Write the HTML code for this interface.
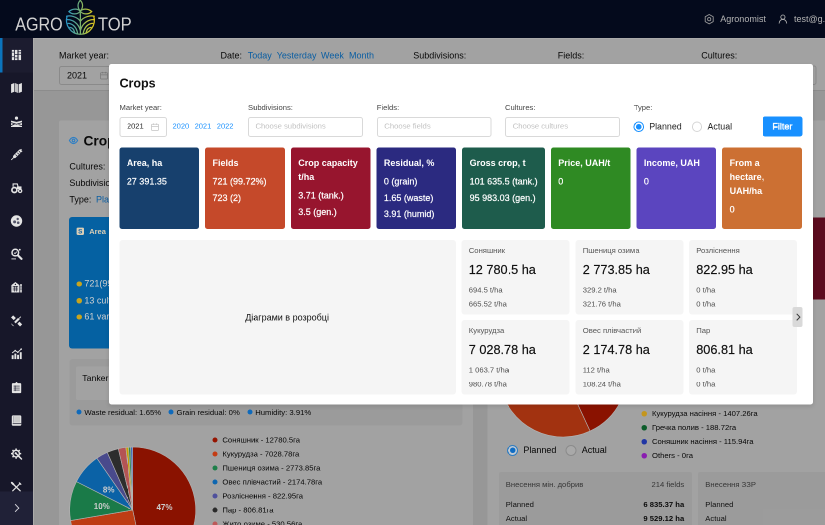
<!DOCTYPE html>
<html lang="en">
<head>
<meta charset="utf-8">
<title>AgroTop - Crops</title>
<style>
*{box-sizing:border-box;margin:0;padding:0}
html,body{width:825px;height:525px;overflow:hidden;background:#040a1c;font-family:"Liberation Sans",Arial,sans-serif;color:#222}
#root{position:absolute;left:0;top:0;width:1650px;height:1050px;transform:scale(.5);transform-origin:0 0;overflow:hidden;will-change:transform}
.a{position:absolute;white-space:nowrap;line-height:1}
.b{position:absolute}
svg{overflow:visible}
#top{position:absolute;left:0;top:0;width:1650px;height:75.5px;background:#040a1c;z-index:30;overflow:hidden}
#side{position:absolute;left:0;top:75.5px;width:65.5px;height:975px;background:#171729;z-index:30}
#content{position:absolute;left:0;top:0;width:1650px;height:1050px;background:#eeeeee;overflow:hidden}
#mask{position:absolute;left:0;top:0;width:1650px;height:1050px;background:rgba(0,0,0,.365);z-index:10}
#over{position:absolute;left:0;top:0;width:1650px;height:1050px;z-index:11}
.lnk{color:#1294ff}
.inp{border:2px solid #d9d9d9;border-radius:5px;background:#fff}
.card{background:#fff;border-radius:4px}
#modal{position:absolute;left:0;top:0;width:1650px;height:1050px;z-index:20}
.mbox{background:#fff;border-radius:5px;box-shadow:0 4px 10px rgba(0,0,0,.12)}
.ph{color:#bfbfbf}
.cc{border-radius:5px;color:#fff}
.gc{background:#f5f5f5;border-radius:6px}
</style>
</head>
<body>
<div id="root">
<div id="content">
<div class="b" style="left:66.00px;top:76.00px;width:1584.00px;height:106.00px;background:#fff;border-bottom:2px solid #ddd"></div>
<div class="a" style="left:118.00px;top:102.06px;font-size:18.00px;color:#0c0c0c">Market year:</div>
<div class="a" style="left:441.00px;top:102.06px;font-size:18.00px;color:#0c0c0c">Date:</div>
<div class="a lnk" style="left:495.50px;top:102.06px;font-size:18.00px;">Today</div>
<div class="a lnk" style="left:553.50px;top:102.06px;font-size:18.00px;">Yesterday</div>
<div class="a lnk" style="left:642.00px;top:102.06px;font-size:18.00px;">Week</div>
<div class="a lnk" style="left:698.00px;top:102.06px;font-size:18.00px;">Month</div>
<div class="a" style="left:826.50px;top:102.06px;font-size:18.00px;color:#0c0c0c">Subdivisions:</div>
<div class="a" style="left:1115.50px;top:102.06px;font-size:18.00px;color:#0c0c0c">Fields:</div>
<div class="a" style="left:1402.50px;top:102.06px;font-size:18.00px;color:#0c0c0c">Cultures:</div>
<div class="b inp" style="left:118.00px;top:132.00px;width:108.00px;height:38.00px;"></div>
<div class="a" style="left:134.00px;top:141.86px;font-size:18.00px;color:#0c0c0c">2021</div>
<div class="b inp" style="left:826.50px;top:132.00px;width:229.50px;height:38.00px;"></div>
<div class="b inp" style="left:1115.50px;top:132.00px;width:228.50px;height:38.00px;"></div>
<div class="b inp" style="left:1402.50px;top:131.20px;width:230.90px;height:38.80px;"></div>
<div class="b card" style="left:118.00px;top:241.00px;width:828.00px;height:879.00px;"></div>
<div class="a" style="left:167.00px;top:267.62px;font-size:27.50px;font-weight:bold;color:#111">Crops</div>
<div class="a" style="left:138.80px;top:323.66px;font-size:18.00px;color:#0c0c0c">Cultures:</div>
<div class="a" style="left:138.80px;top:356.86px;font-size:18.00px;color:#0c0c0c">Subdivisions:</div>
<div class="a" style="left:138.80px;top:390.46px;font-size:18.00px;color:#0c0c0c">Type:</div>
<div class="a lnk" style="left:192.00px;top:390.46px;font-size:18.00px;">Planned</div>
<div class="b" style="left:138.00px;top:434.00px;width:262.00px;height:262.50px;background:#0999ff;border-radius:6px"></div>
<div class="b" style="left:139.00px;top:718.00px;width:785.60px;height:133.40px;background:#f5f5f5;border-radius:6px"></div>
<div class="b" style="left:152.40px;top:733.40px;width:757.60px;height:66.60px;background:#fff;border-radius:4px"></div>
<div class="a" style="left:164.60px;top:748.18px;font-size:17.40px;color:#0c0c0c">Tanker: 3.71 t/ha</div>
<div class="a" style="left:168.80px;top:816.64px;font-size:15.40px;color:#0c0c0c">Waste residual: 1.65%</div>
<div class="a" style="left:353.00px;top:816.64px;font-size:15.40px;color:#0c0c0c">Grain residual: 0%</div>
<div class="a" style="left:510.40px;top:816.64px;font-size:15.40px;color:#0c0c0c">Humidity: 3.91%</div>
<div class="a" style="left:444.80px;top:871.87px;font-size:15.34px;color:#0c0c0c">Соняшник - 12780.5га</div>
<div class="a" style="left:444.80px;top:899.87px;font-size:15.34px;color:#0c0c0c">Кукурудза - 7028.78га</div>
<div class="a" style="left:444.80px;top:927.87px;font-size:15.34px;color:#0c0c0c">Пшениця озима - 2773.85га</div>
<div class="a" style="left:444.80px;top:955.87px;font-size:15.34px;color:#0c0c0c">Овес плівчастий - 2174.78га</div>
<div class="a" style="left:444.80px;top:983.87px;font-size:15.34px;color:#0c0c0c">Розліснення - 822.95га</div>
<div class="a" style="left:444.80px;top:1011.87px;font-size:15.34px;color:#0c0c0c">Пар - 806.81га</div>
<div class="a" style="left:444.80px;top:1039.87px;font-size:15.34px;color:#0c0c0c">Жито озиме - 530.56га</div>
<div class="b card" style="left:975.00px;top:241.00px;width:825.00px;height:879.00px;"></div>
<div class="b" style="left:1580.00px;top:434.80px;width:220.00px;height:164.60px;background:#8f1230;border-radius:6px"></div>
<div class="a" style="left:1046.80px;top:891.06px;font-size:18.00px;color:#0c0c0c">Planned</div>
<div class="a" style="left:1163.60px;top:891.06px;font-size:18.00px;color:#0c0c0c">Actual</div>
<div class="a" style="left:1304.00px;top:819.07px;font-size:15.34px;color:#0c0c0c">Кукурудза насіння - 1407.26га</div>
<div class="a" style="left:1304.00px;top:847.07px;font-size:15.34px;color:#0c0c0c">Гречка полив - 188.72га</div>
<div class="a" style="left:1304.00px;top:875.07px;font-size:15.34px;color:#0c0c0c">Соняшник насіння - 115.94га</div>
<div class="a" style="left:1304.00px;top:903.07px;font-size:15.34px;color:#0c0c0c">Others - 0га</div>
<div class="b" style="left:997.60px;top:944.40px;width:386.80px;height:175.60px;background:#f5f5f5;border-radius:4px"></div>
<div class="a" style="left:1011.60px;top:961.09px;font-size:15.30px;color:#555">Внесення мін. добрив</div>
<div class="a" style="right:281.60px;top:961.09px;font-size:15.30px;color:#555">214 fields</div>
<div class="a" style="left:1011.60px;top:1000.69px;font-size:15.30px;color:#1a1a1a">Planned</div>
<div class="a" style="left:1011.60px;top:1028.89px;font-size:15.30px;color:#1a1a1a">Actual</div>
<div class="a" style="right:281.60px;top:1000.69px;font-size:15.30px;color:#111;font-weight:bold">6 835.37 ha</div>
<div class="a" style="right:281.60px;top:1028.89px;font-size:15.30px;color:#111;font-weight:bold">9 529.12 ha</div>
<div class="b" style="left:1396.00px;top:944.40px;width:404.00px;height:175.60px;background:#f5f5f5;border-radius:4px"></div>
<div class="a" style="left:1410.60px;top:961.09px;font-size:15.30px;color:#555">Внесення ЗЗР</div>
<div class="a" style="left:1410.60px;top:1000.69px;font-size:15.30px;color:#1a1a1a">Planned</div>
<div class="a" style="left:1410.60px;top:1028.89px;font-size:15.30px;color:#1a1a1a">Actual</div>
<svg class="b" style="left:200.00px;top:143.40px;width:16.00px;height:16.00px;" viewBox="0 0 8 8"><rect x=".5" y="1.3" width="7" height="6.2" rx=".7" fill="none" stroke="#bdbdbd" stroke-width=".75"/><path d="M.5 3.4h7M2.4 .4v1.500M5.600 .4v1.500" stroke="#bdbdbd" stroke-width=".75" fill="none"/></svg>
</div>
<div id="mask"></div>
<div id="over">
<div class="a" style="left:178.40px;top:454.85px;font-size:15.00px;font-weight:bold;color:#dccfb6">Area</div>
<div class="b" style="left:153.20px;top:562.80px;width:10.40px;height:10.40px;background:#c8a41e;border-radius:50%"></div>
<div class="a" style="left:168.80px;top:558.46px;font-size:18.00px;color:#d0d0d0">721(99.72%)</div>
<div class="b" style="left:153.20px;top:596.30px;width:10.40px;height:10.40px;background:#c8a41e;border-radius:50%"></div>
<div class="a" style="left:168.80px;top:591.96px;font-size:18.00px;color:#d0d0d0">13 cultures</div>
<div class="b" style="left:153.20px;top:628.80px;width:10.40px;height:10.40px;background:#c8a41e;border-radius:50%"></div>
<div class="a" style="left:168.80px;top:624.46px;font-size:18.00px;color:#d0d0d0">61 varieties</div>
<div class="b" style="left:152.60px;top:819.40px;width:10.00px;height:10.00px;background:#0f6abb;border-radius:50%"></div>
<div class="b" style="left:337.00px;top:819.40px;width:10.00px;height:10.00px;background:#0f6abb;border-radius:50%"></div>
<div class="b" style="left:495.00px;top:819.40px;width:10.00px;height:10.00px;background:#0f6abb;border-radius:50%"></div>
<div class="b" style="left:424.60px;top:874.60px;width:10.80px;height:10.80px;background:#961400;border-radius:50%"></div>
<div class="b" style="left:424.60px;top:902.60px;width:10.80px;height:10.80px;background:#c43c14;border-radius:50%"></div>
<div class="b" style="left:424.60px;top:930.60px;width:10.80px;height:10.80px;background:#1d7f49;border-radius:50%"></div>
<div class="b" style="left:424.60px;top:958.60px;width:10.80px;height:10.80px;background:#0d66b0;border-radius:50%"></div>
<div class="b" style="left:424.60px;top:986.60px;width:10.80px;height:10.80px;background:#4f509c;border-radius:50%"></div>
<div class="b" style="left:424.60px;top:1014.60px;width:10.80px;height:10.80px;background:#2a2a2a;border-radius:50%"></div>
<div class="b" style="left:424.60px;top:1042.60px;width:10.80px;height:10.80px;background:#bd5959;border-radius:50%"></div>
<div class="b" style="left:1014.40px;top:889.80px;width:22.00px;height:22.00px;border:2px solid #2f7cc0;border-radius:50%;background:#c2cad2"></div>
<div class="b" style="left:1019.80px;top:895.20px;width:11.20px;height:11.20px;background:#106dc4;border-radius:50%"></div>
<div class="b" style="left:1131.40px;top:889.80px;width:22.00px;height:22.00px;border:2px solid #8b8b8b;border-radius:50%;background:#a9a9a9"></div>
<div class="b" style="left:1283.40px;top:821.80px;width:10.80px;height:10.80px;background:#c4961e;border-radius:50%"></div>
<div class="b" style="left:1283.40px;top:849.80px;width:10.80px;height:10.80px;background:#0c5c2a;border-radius:50%"></div>
<div class="b" style="left:1283.40px;top:877.80px;width:10.80px;height:10.80px;background:#2036a4;border-radius:50%"></div>
<div class="b" style="left:1283.40px;top:905.80px;width:10.80px;height:10.80px;background:#8a1eb0;border-radius:50%"></div>
<svg class="b" style="left:0.00px;top:0.00px;width:1650.00px;height:1050.00px;" viewBox="0 0 825 525"><path d="M132.70 510.00L132.70 447.00A63 63 0 0 1 145.83 571.62z" fill="#8a1200" stroke="#b4b4b4" stroke-width="0.6" stroke-linejoin="round"/><path d="M132.70 510.00L145.83 571.62A63 63 0 0 1 70.59 520.56z" fill="#bd3c14" stroke="#b4b4b4" stroke-width="0.6" stroke-linejoin="round"/><path d="M132.70 510.00L70.59 520.56A63 63 0 0 1 76.47 481.59z" fill="#1a7a48" stroke="#b4b4b4" stroke-width="0.6" stroke-linejoin="round"/><path d="M132.70 510.00L76.47 481.59A63 63 0 0 1 96.92 458.15z" fill="#0b62a6" stroke="#b4b4b4" stroke-width="0.6" stroke-linejoin="round"/><path d="M132.70 510.00L96.92 458.15A63 63 0 0 1 107.28 452.36z" fill="#494a8c" stroke="#b4b4b4" stroke-width="0.6" stroke-linejoin="round"/><path d="M132.70 510.00L107.28 452.36A63 63 0 0 1 118.32 448.66z" fill="#2d2d2d" stroke="#b4b4b4" stroke-width="0.6" stroke-linejoin="round"/><path d="M132.70 510.00L118.32 448.66A63 63 0 0 1 125.88 447.37z" fill="#b45454" stroke="#b4b4b4" stroke-width="0.6" stroke-linejoin="round"/><path d="M132.70 510.00L125.88 447.37A63 63 0 0 1 128.47 447.14z" fill="#c9a000" stroke="#b4b4b4" stroke-width="0.6" stroke-linejoin="round"/><path d="M132.70 510.00L128.47 447.14A63 63 0 0 1 130.63 447.03z" fill="#2e8a4e" stroke="#b4b4b4" stroke-width="0.6" stroke-linejoin="round"/><path d="M132.70 510.00L130.63 447.03A63 63 0 0 1 132.70 447.00z" fill="#4068b8" stroke="#b4b4b4" stroke-width="0.6" stroke-linejoin="round"/><path d="M563.10 372.70L563.10 308.40A64.3 64.3 0 0 1 590.07 431.07z" fill="#8a1200" stroke="#b4b4b4" stroke-width="0.6" stroke-linejoin="round"/><path d="M563.10 372.70L590.07 431.07A64.3 64.3 0 1 1 563.10 308.40z" fill="#a23210" stroke="#b4b4b4" stroke-width="0.6" stroke-linejoin="round"/><g font-family="Liberation Sans, Arial, sans-serif" font-size="8" font-weight="bold" fill="#cdcdcd" text-anchor="middle"><text x="164.5" y="510.2">47%</text><text x="101.8" y="508.9">10%</text><text x="108.7" y="492.5">8%</text></g></svg>
<div class="b" style="left:65.80px;top:76.00px;width:2.60px;height:974.00px;background:#acacaa"></div>
<div class="b" style="left:66.00px;top:75.40px;width:1584.00px;height:2.00px;background:#b2b2b2"></div>
<svg class="b" style="left:138.00px;top:271.00px;width:18.00px;height:20.00px;" viewBox="0 0 9 10"><path d="M.4 5C1.500 3 2.900 2 4.500 2S7.500 3 8.600 5C7.500 7 6.100 8 4.500 8S1.500 7 .4 5z" fill="none" stroke="#2f7fc4" stroke-width="1.15"/><circle cx="4.500" cy="5" r="1.300" fill="none" stroke="#2f7fc4" stroke-width="1.15"/></svg>
<svg class="b" style="left:153.40px;top:455.00px;width:15.20px;height:15.20px;" viewBox="0 0 7.600 7.600"><rect x=".1" y=".1" width="7.400" height="7.400" rx="1.200" fill="#dccfb6"/><text x="3.800" y="6.100" font-family="Liberation Sans, Arial, sans-serif" font-size="6.400" font-weight="bold" fill="#0a62a8" text-anchor="middle">S</text></svg>
</div>
<div id="top">
<svg class="b" style="left:0.00px;top:0.00px;width:1650.00px;height:76.00px;" viewBox="0 0 825 38"><defs><linearGradient id="lg" x1="66" y1="0" x2="95" y2="0" gradientUnits="userSpaceOnUse"><stop offset="0" stop-color="#2593c9"/><stop offset=".45" stop-color="#6fae7a"/><stop offset=".75" stop-color="#b9c43a"/><stop offset="1" stop-color="#e0c21c"/></linearGradient></defs>
<g font-family="Liberation Sans, Arial, sans-serif" font-size="18.9" fill="#d2d2d2"><text x="15.3" y="30.6" textLength="47.4" lengthAdjust="spacingAndGlyphs">AGRO</text><text x="97.9" y="30.6" textLength="33.8" lengthAdjust="spacingAndGlyphs">TOP</text></g>
<g fill="none" stroke="url(#lg)" stroke-width="1.25" stroke-linecap="round">
<path d="M67 16.4C64.6 24.500 70.500 34.300 80.400 34.300S96.200 24.500 93.800 16.400"/>
<path d="M66.6 16.2C70 15.2 77 16.5 80.4 21.2"/>
<path d="M94.3 16.2C90.8 15.2 83.8 16.5 80.4 21.2"/>
<path d="M80.4 14.8V34"/>
<path d="M67 19.6C72.5 19.2 78.5 23.5 80.2 30"/>
<path d="M68 23.4C72.5 23.4 76.5 27 77.6 33.4"/>
<path d="M69.8 27.4C72.3 27.6 74 29.6 74.6 32.4"/>
<path d="M93.8 19.6C88.3 19.2 82.3 23.5 80.6 30"/>
<path d="M92.8 23.4C88.3 23.4 84.3 27 83.2 33.4"/>
<path d="M91 27.4C88.5 27.6 86.8 29.6 86.2 32.4"/>
<path d="M80.3 .3C77.3 3.3 77.3 8 80.3 11 83.3 8 83.3 3.300 80.3 .3z"/>
<path d="M80.3 11.2C78 8.4 72.3 8.300 68.900 11.600 72 14.900 78 14.600 80.300 11.200z"/>
<path d="M80.3 11.2C82.6 8.4 88.3 8.300 91.700 11.600 88.600 14.900 82.600 14.600 80.300 11.200z"/>
<path d="M80.3 11V15"/>
</g>
<g fill="none" stroke="#9c9c9c" stroke-width=".85"><path d="M709.2 14.500 713.200 16.800V21.600L709.200 23.900 705.200 21.600V16.800z" stroke-linejoin="round"/><circle cx="709.2" cy="19.200" r="1.600"/>
<circle cx="782.9" cy="17.100" r="2.100" stroke="#b4b4b4"/><path d="M779.1 23.500C779.400 20.600 781.100 19.400 782.900 19.400S786.400 20.600 786.700 23.500" stroke="#b4b4b4"/></g>
</svg>
<div class="a" style="left:1440.60px;top:29.26px;font-size:18.00px;color:#b4b4b4">Agronomist</div>
<div class="a" style="left:1588.00px;top:29.26px;font-size:18.00px;color:#b4b4b4">test@g.com</div>
</div>
<div id="side">
<div class="b" style="left:0.00px;top:0.00px;width:66.00px;height:69.00px;background:#1c1c2f;border-left:5.4px solid #0b74bc"></div>
<div class="b" style="left:0.00px;top:907.00px;width:66.00px;height:67.00px;background:#202137"></div>
<svg class="b" style="left:21.00px;top:22.20px;width:24.00px;height:24.00px;" viewBox="0 0 12 12"><g fill="#e4e4e4"><rect x="1.35" y="0.9" width="2.35" height="10.2"/><rect x="4.5" y="0.9" width="2.45" height="10.2"/><rect x="8.05" y="0.9" width="2.5" height="10.2"/></g><g stroke="#20213a" stroke-width=".75"><path d="M1.3 3.1h2.5M1.300 7.800h2.500M4.400 5.600h2.600M4.400 8.900h2.600M8 2.700h2.600M8 5.300h2.600"/></g></svg>
<svg class="b" style="left:21.00px;top:88.00px;width:24.00px;height:24.00px;" viewBox="0 0 12 12"><g fill="#e4e4e4"><path d="M.6 2.3 3.8 1v8.7L.6 11z"/><path d="M4.4 1l3.2 1.3V11L4.4 9.7z" opacity=".82"/><path d="M8.2 2.3 11.4 1v8.7L8.2 11z"/></g></svg>
<svg class="b" style="left:21.00px;top:156.80px;width:24.00px;height:24.00px;" viewBox="0 0 12 12"><g fill="#e4e4e4"><circle cx="6" cy="2.1" r="1.6"/><path d="M.5 4.6 6 5.9l5.5-1.3V11H.5z"/></g><g stroke="#171729" stroke-width=".8" fill="none"><path d="M.5 6.6 6 8.2l5.5-1.6M.5 9.6 4 8M11.5 9.6 8 8.6"/></g></svg>
<svg class="b" style="left:21.00px;top:221.40px;width:24.00px;height:24.00px;" viewBox="0 0 12 12"><g stroke="#e4e4e4" stroke-linecap="round" fill="none"><path d="M1 11.2 4.5 7.7" stroke-width=".9"/><path d="M4.2 8 9.6 2.6" stroke-width="3.2"/><path d="M9 2.2 10.8 .9M10 3.3l1.4-.6" stroke-width=".9"/></g><g stroke="#171729" stroke-width=".7"><path d="M5 6l1.6 1.6M6.8 4.2l1.6 1.6M8.4 2.6 10 4.2"/></g></svg>
<svg class="b" style="left:21.00px;top:288.00px;width:24.00px;height:24.00px;" viewBox="0 0 12 12"><g fill="none" stroke="#e4e4e4"><circle cx="3.9" cy="8" r="2.5" stroke-width="1.7"/><circle cx="9.6" cy="8.9" r="1.6" stroke-width="1.3"/><path d="M2.6 4.8V1.9h4.2l.8 2.9" stroke-width="1.1"/></g><path d="M6.4 4.4h4.6v2.6H6.4z" fill="#e4e4e4"/></svg>
<svg class="b" style="left:21.00px;top:354.00px;width:24.00px;height:24.00px;" viewBox="0 0 12 12"><circle cx="6" cy="6" r="5.7" fill="#e4e4e4"/><g fill="#55566a"><circle cx="4.1" cy="6.9" r="1.5"/><circle cx="7.7" cy="7.7" r="1.3"/><circle cx="7.2" cy="4" r="1.2"/></g></svg>
<svg class="b" style="left:21.00px;top:420.40px;width:24.00px;height:24.00px;" viewBox="0 0 12 12"><g fill="none" stroke="#e4e4e4"><circle cx="4.8" cy="4.6" r="3.3" stroke-width="1.5"/><path d="M7.3 7.2 11 10.9" stroke-width="2.1" stroke-linecap="round"/><path d="M.9 10.9h4.6" stroke-width=".9"/><path d="M3.5 4.7l1 1 1.8-2" stroke-width=".8"/></g><circle cx="9.3" cy="1.7" r=".9" fill="#e4e4e4"/></svg>
<svg class="b" style="left:21.00px;top:487.20px;width:24.00px;height:24.00px;" viewBox="0 0 12 12"><g fill="#e4e4e4"><path d="M.9 3.6 4.9.5l4 3.1V11H.9z"/><rect x="9.7" y="2.6" width="1.6" height="8.4"/></g><g stroke="#171729" stroke-width=".6"><path d="M2.2 4.8h5.4M2.2 6.6h5.4M2.2 8.4h5.4M4 4.8v5.2M5.9 4.8v5.2M9.7 5.4h1.6M9.7 7.6h1.6"/></g><circle cx="4.9" cy="2.9" r=".7" fill="#171729"/></svg>
<svg class="b" style="left:21.00px;top:554.20px;width:24.00px;height:24.00px;" viewBox="0 0 12 12"><g stroke="#e4e4e4" fill="none"><path d="M1.6 1.4 4.3 4.1" stroke-width="3"/><path d="M7.9 7.7l2.7 2.7" stroke-width="3"/><path d="M4.4 7.6 8.4 3.6" stroke-width="2.2"/><path d="M8.6 3.4 10.3 1.7" stroke-width=".9"/></g><path d="M.8 8.2a3 3 0 0 0 3 3z" fill="#b9b9b9"/></svg>
<svg class="b" style="left:21.00px;top:620.80px;width:24.00px;height:24.00px;" viewBox="0 0 12 12"><g fill="#e4e4e4"><rect x="1.2" y="7.2" width="1.9" height="3.9"/><rect x="3.9" y="5.6" width="1.9" height="5.5"/><rect x="6.6" y="6.8" width="1.9" height="4.3"/><rect x="9.3" y="4.2" width="1.9" height="6.9"/></g><path d="M1.6 5 4.7 2.6 7.3 4.3 10.9.9" stroke="#e4e4e4" stroke-width=".9" fill="none"/><g fill="#e4e4e4"><circle cx="4.7" cy="2.6" r=".8"/><circle cx="7.3" cy="4.3" r=".8"/><circle cx="10.7" cy="1.1" r=".8"/></g></svg>
<svg class="b" style="left:21.00px;top:687.20px;width:24.00px;height:24.00px;" viewBox="0 0 12 12"><g fill="#e4e4e4"><rect x="1.4" y="1.6" width="9.3" height="10" rx=".9"/><path d="M4 2.4 6 .3l2 2.1z"/></g><g stroke="#171729" stroke-width=".65"><path d="M3 4.6h6.2M3 6.6h6.2M3 8.6h6.2M4.6 4v5.6"/></g></svg>
<svg class="b" style="left:21.00px;top:753.20px;width:24.00px;height:24.00px;" viewBox="0 0 12 12"><rect x="1.3" y=".9" width="9.5" height="10.4" rx="1.2" fill="#e4e4e4"/><path d="M3.3 1.6v6.6" stroke="#8a8a92" stroke-width=".8"/><path d="M2.2 9.2h8.6" stroke="#171729" stroke-width=".7"/><rect x="4.3" y="1.8" width="5.3" height="6.2" fill="#c9c9c9"/></svg>
<svg class="b" style="left:21.00px;top:820.00px;width:24.00px;height:24.00px;" viewBox="0 0 12 12"><g fill="none" stroke="#e4e4e4"><circle cx="5.6" cy="5.6" r="3.3" stroke-width="1.4"/><path d="M5.6 .5v1.6M5.6 9.1v1.6M.5 5.6h1.6M9.1 5.6h1.6M2 2l1.1 1.1M8.1 8.1l1.1 1.1M2 9.2l1.1-1.1M8.1 3.1 9.2 2" stroke-width="1.5"/><path d="M5.4 5.4 11 11" stroke-width="1.5" stroke-linecap="round"/></g><circle cx="5.2" cy="5.2" r="1.1" fill="#e4e4e4"/></svg>
<svg class="b" style="left:21.00px;top:886.40px;width:24.00px;height:24.00px;" viewBox="0 0 12 12"><g stroke="#e4e4e4" fill="none" stroke-linecap="round"><path d="M2.1 2.600 9.700 9.800" stroke-width="1.300"/><path d="M9.600 2.500 2.200 9.800" stroke-width="1.200"/><path d="M8.900 1.900 10.300 3.300" stroke-width="1.300"/><path d="M1.300 1.700 2.900 3.300" stroke-width="1.900"/></g></svg>
<svg class="b" style="left:21.00px;top:928.00px;width:24.00px;height:24.00px;" viewBox="0 0 12 12"><path d="M4.6 2.2 8.2 6 4.6 9.8" fill="none" stroke="#cfcfd6" stroke-width="1"/></svg>
</div>
<div id="modal">
<div class="b mbox" style="left:218.00px;top:127.60px;width:1408.00px;height:681.00px;"></div>
<div class="a" style="left:239.00px;top:153.55px;font-size:25.00px;font-weight:bold;color:#111">Crops</div>
<div class="a" style="left:239.00px;top:206.92px;font-size:15.24px;color:#454545">Market year:</div>
<div class="b inp" style="left:239.00px;top:233.50px;width:94.50px;height:40.00px;"></div>
<div class="a" style="left:253.80px;top:244.20px;font-size:15.10px;color:#262626">2021</div>
<div class="a" style="left:345.00px;top:244.05px;font-size:15.00px;color:#1890ff">2020</div>
<div class="a" style="left:389.20px;top:244.05px;font-size:15.00px;color:#1890ff">2021</div>
<div class="a" style="left:433.60px;top:244.05px;font-size:15.00px;color:#1890ff">2022</div>
<div class="a" style="left:496.00px;top:206.92px;font-size:15.24px;color:#454545">Subdivisions:</div>
<div class="b inp" style="left:496.00px;top:233.50px;width:230.00px;height:40.00px;"></div>
<div class="a ph" style="left:511.00px;top:244.09px;font-size:15.30px;">Choose subdivisions</div>
<div class="a" style="left:753.50px;top:206.92px;font-size:15.24px;color:#454545">Fields:</div>
<div class="b inp" style="left:753.50px;top:233.50px;width:229.50px;height:40.00px;"></div>
<div class="a ph" style="left:768.60px;top:244.09px;font-size:15.30px;">Choose fields</div>
<div class="a" style="left:1010.00px;top:206.92px;font-size:15.24px;color:#454545">Cultures:</div>
<div class="b inp" style="left:1010.00px;top:233.50px;width:230.00px;height:40.00px;"></div>
<div class="a ph" style="left:1025.50px;top:244.09px;font-size:15.30px;">Choose cultures</div>
<div class="a" style="left:1267.50px;top:206.92px;font-size:15.24px;color:#454545">Type:</div>
<div class="b" style="left:1267.40px;top:243.20px;width:20.40px;height:20.40px;border:2px solid #1890ff;border-radius:50%;background:#fff"></div>
<div class="b" style="left:1272.40px;top:248.20px;width:10.40px;height:10.40px;background:#1890ff;border-radius:50%"></div>
<div class="a" style="left:1298.40px;top:245.22px;font-size:17.70px;color:#262626">Planned</div>
<div class="b" style="left:1383.60px;top:243.20px;width:20.40px;height:20.40px;border:2px solid #d6d6d6;border-radius:50%;background:#fff"></div>
<div class="a" style="left:1415.00px;top:245.22px;font-size:17.70px;color:#262626">Actual</div>
<div class="b" style="left:1525.00px;top:233.20px;width:79.60px;height:39.80px;background:#1890ff;border-radius:5px"></div>
<div class="a" style="left:1544.80px;top:244.26px;font-size:18.00px;color:#fff;-webkit-text-stroke:0.7px #fff">Filter</div>
<div class="b cc" style="left:238.80px;top:294.60px;width:159.40px;height:163.80px;background:#17406d"></div>
<div class="a" style="left:253.60px;top:312.46px;font-size:18.00px;line-height:28.00px;font-weight:bold;color:#fff">Area, ha</div>
<div class="a" style="left:253.60px;top:354.26px;font-size:18.00px;color:#fff;-webkit-text-stroke:0.4px #fff">27 391.35</div>
<div class="b cc" style="left:410.20px;top:294.60px;width:159.40px;height:163.80px;background:#c5492a"></div>
<div class="a" style="left:425.00px;top:312.46px;font-size:18.00px;line-height:28.00px;font-weight:bold;color:#fff">Fields</div>
<div class="a" style="left:425.00px;top:354.26px;font-size:18.00px;color:#fff;-webkit-text-stroke:0.4px #fff">721 (99.72%)</div>
<div class="a" style="left:425.00px;top:386.76px;font-size:18.00px;color:#fff;-webkit-text-stroke:0.4px #fff">723 (2)</div>
<div class="b cc" style="left:581.60px;top:294.60px;width:159.40px;height:163.80px;background:#97152e"></div>
<div class="a" style="left:596.40px;top:312.46px;font-size:18.00px;line-height:28.00px;font-weight:bold;color:#fff">Crop capacity<br>t/ha</div>
<div class="a" style="left:596.40px;top:382.26px;font-size:18.00px;color:#fff;-webkit-text-stroke:0.4px #fff">3.71 (tank.)</div>
<div class="a" style="left:596.40px;top:414.76px;font-size:18.00px;color:#fff;-webkit-text-stroke:0.4px #fff">3.5 (gen.)</div>
<div class="b cc" style="left:753.00px;top:294.60px;width:159.40px;height:163.80px;background:#2b2a80"></div>
<div class="a" style="left:767.80px;top:312.46px;font-size:18.00px;line-height:28.00px;font-weight:bold;color:#fff">Residual, %</div>
<div class="a" style="left:767.80px;top:354.26px;font-size:18.00px;color:#fff;-webkit-text-stroke:0.4px #fff">0 (grain)</div>
<div class="a" style="left:767.80px;top:386.76px;font-size:18.00px;color:#fff;-webkit-text-stroke:0.4px #fff">1.65 (waste)</div>
<div class="a" style="left:767.80px;top:419.26px;font-size:18.00px;color:#fff;-webkit-text-stroke:0.4px #fff">3.91 (humid)</div>
<div class="b cc" style="left:924.40px;top:294.60px;width:165.20px;height:163.80px;background:#1e5c4c"></div>
<div class="a" style="left:939.20px;top:312.46px;font-size:18.00px;line-height:28.00px;font-weight:bold;color:#fff">Gross crop, t</div>
<div class="a" style="left:939.20px;top:354.26px;font-size:18.00px;color:#fff;-webkit-text-stroke:0.4px #fff">101 635.5 (tank.)</div>
<div class="a" style="left:939.20px;top:386.76px;font-size:18.00px;color:#fff;-webkit-text-stroke:0.4px #fff">95 983.03 (gen.)</div>
<div class="b cc" style="left:1101.60px;top:294.60px;width:159.40px;height:163.80px;background:#2f8a23"></div>
<div class="a" style="left:1116.40px;top:312.46px;font-size:18.00px;line-height:28.00px;font-weight:bold;color:#fff">Price, UAH/t</div>
<div class="a" style="left:1116.40px;top:354.26px;font-size:18.00px;color:#fff;-webkit-text-stroke:0.4px #fff">0</div>
<div class="b cc" style="left:1273.00px;top:294.60px;width:159.40px;height:163.80px;background:#5b45bf"></div>
<div class="a" style="left:1287.80px;top:312.46px;font-size:18.00px;line-height:28.00px;font-weight:bold;color:#fff">Income, UAH</div>
<div class="a" style="left:1287.80px;top:354.26px;font-size:18.00px;color:#fff;-webkit-text-stroke:0.4px #fff">0</div>
<div class="b cc" style="left:1444.40px;top:294.60px;width:159.40px;height:163.80px;background:#cc7033"></div>
<div class="a" style="left:1459.20px;top:312.46px;font-size:18.00px;line-height:28.00px;font-weight:bold;color:#fff">From a<br>hectare,<br>UAH/ha</div>
<div class="a" style="left:1459.20px;top:410.26px;font-size:18.00px;color:#fff;-webkit-text-stroke:0.4px #fff">0</div>
<div class="b gc" style="left:239.00px;top:480.00px;width:672.50px;height:309.00px;"></div>
<div class="a" style="left:490.40px;top:626.46px;font-size:18.00px;color:#111">Діаграми в розробці</div>
<div class="b gc" style="left:922.50px;top:480.00px;width:216.50px;height:148.80px;"></div>
<div class="a" style="left:937.50px;top:492.86px;font-size:15.36px;color:#555">Соняшник</div>
<div class="a" style="left:937.50px;top:527.34px;font-size:25.40px;color:#111;-webkit-text-stroke:0.35px #111">12 780.5 ha</div>
<div class="a" style="left:937.50px;top:572.12px;font-size:15.24px;color:#505050">694.5 t/ha</div>
<div class="a" style="left:937.50px;top:600.12px;font-size:15.24px;color:#505050">665.52 t/ha</div>
<div class="b gc" style="left:1150.50px;top:480.00px;width:216.50px;height:148.80px;"></div>
<div class="a" style="left:1165.50px;top:492.86px;font-size:15.36px;color:#555">Пшениця озима</div>
<div class="a" style="left:1165.50px;top:527.34px;font-size:25.40px;color:#111;-webkit-text-stroke:0.35px #111">2 773.85 ha</div>
<div class="a" style="left:1165.50px;top:572.12px;font-size:15.24px;color:#505050">329.2 t/ha</div>
<div class="a" style="left:1165.50px;top:600.12px;font-size:15.24px;color:#505050">321.76 t/ha</div>
<div class="b gc" style="left:1377.50px;top:480.00px;width:216.50px;height:148.80px;"></div>
<div class="a" style="left:1392.50px;top:492.86px;font-size:15.36px;color:#555">Розліснення</div>
<div class="a" style="left:1392.50px;top:527.34px;font-size:25.40px;color:#111;-webkit-text-stroke:0.35px #111">822.95 ha</div>
<div class="a" style="left:1392.50px;top:572.12px;font-size:15.24px;color:#505050">0 t/ha</div>
<div class="a" style="left:1392.50px;top:600.12px;font-size:15.24px;color:#505050">0 t/ha</div>
<div class="b gc" style="left:922.50px;top:640.00px;width:216.50px;height:148.80px;"></div>
<div class="a" style="left:937.50px;top:652.86px;font-size:15.36px;color:#555">Кукурудза</div>
<div class="a" style="left:937.50px;top:687.34px;font-size:25.40px;color:#111;-webkit-text-stroke:0.35px #111">7 028.78 ha</div>
<div class="a" style="left:937.50px;top:732.12px;font-size:15.24px;color:#505050">1 063.7 t/ha</div>
<div class="a" style="left:937.50px;top:760.12px;font-size:15.24px;color:#505050">980.78 t/ha</div>
<div class="b gc" style="left:1150.50px;top:640.00px;width:216.50px;height:148.80px;"></div>
<div class="a" style="left:1165.50px;top:652.86px;font-size:15.36px;color:#555">Овес плівчастий</div>
<div class="a" style="left:1165.50px;top:687.34px;font-size:25.40px;color:#111;-webkit-text-stroke:0.35px #111">2 174.78 ha</div>
<div class="a" style="left:1165.50px;top:732.12px;font-size:15.24px;color:#505050">112 t/ha</div>
<div class="a" style="left:1165.50px;top:760.12px;font-size:15.24px;color:#505050">108.24 t/ha</div>
<div class="b gc" style="left:1377.50px;top:640.00px;width:216.50px;height:148.80px;"></div>
<div class="a" style="left:1392.50px;top:652.86px;font-size:15.36px;color:#555">Пар</div>
<div class="a" style="left:1392.50px;top:687.34px;font-size:25.40px;color:#111;-webkit-text-stroke:0.35px #111">806.81 ha</div>
<div class="a" style="left:1392.50px;top:732.12px;font-size:15.24px;color:#505050">0 t/ha</div>
<div class="a" style="left:1392.50px;top:760.12px;font-size:15.24px;color:#505050">0 t/ha</div>
<div class="b" style="left:1584.60px;top:613.80px;width:20.00px;height:40.00px;background:#d9d9d9;border-radius:4px"></div>
<svg class="b" style="left:301.60px;top:245.60px;width:16.00px;height:16.00px;" viewBox="0 0 8 8"><rect x=".5" y="1.3" width="7" height="6.2" rx=".7" fill="none" stroke="#c4c4c4" stroke-width=".75"/><path d="M.5 3.4h7M2.4 .4v1.500M5.600 .4v1.500" stroke="#c4c4c4" stroke-width=".75" fill="none"/></svg>
<svg class="b" style="left:1584.60px;top:624.00px;width:20.00px;height:20.00px;" viewBox="0 0 10 10"><path d="M4.2 1.800 7.400 5.100 4.200 8.400" fill="none" stroke="#3a3a3a" stroke-width="1"/></svg>
</div>
</div>
</body>
</html>
